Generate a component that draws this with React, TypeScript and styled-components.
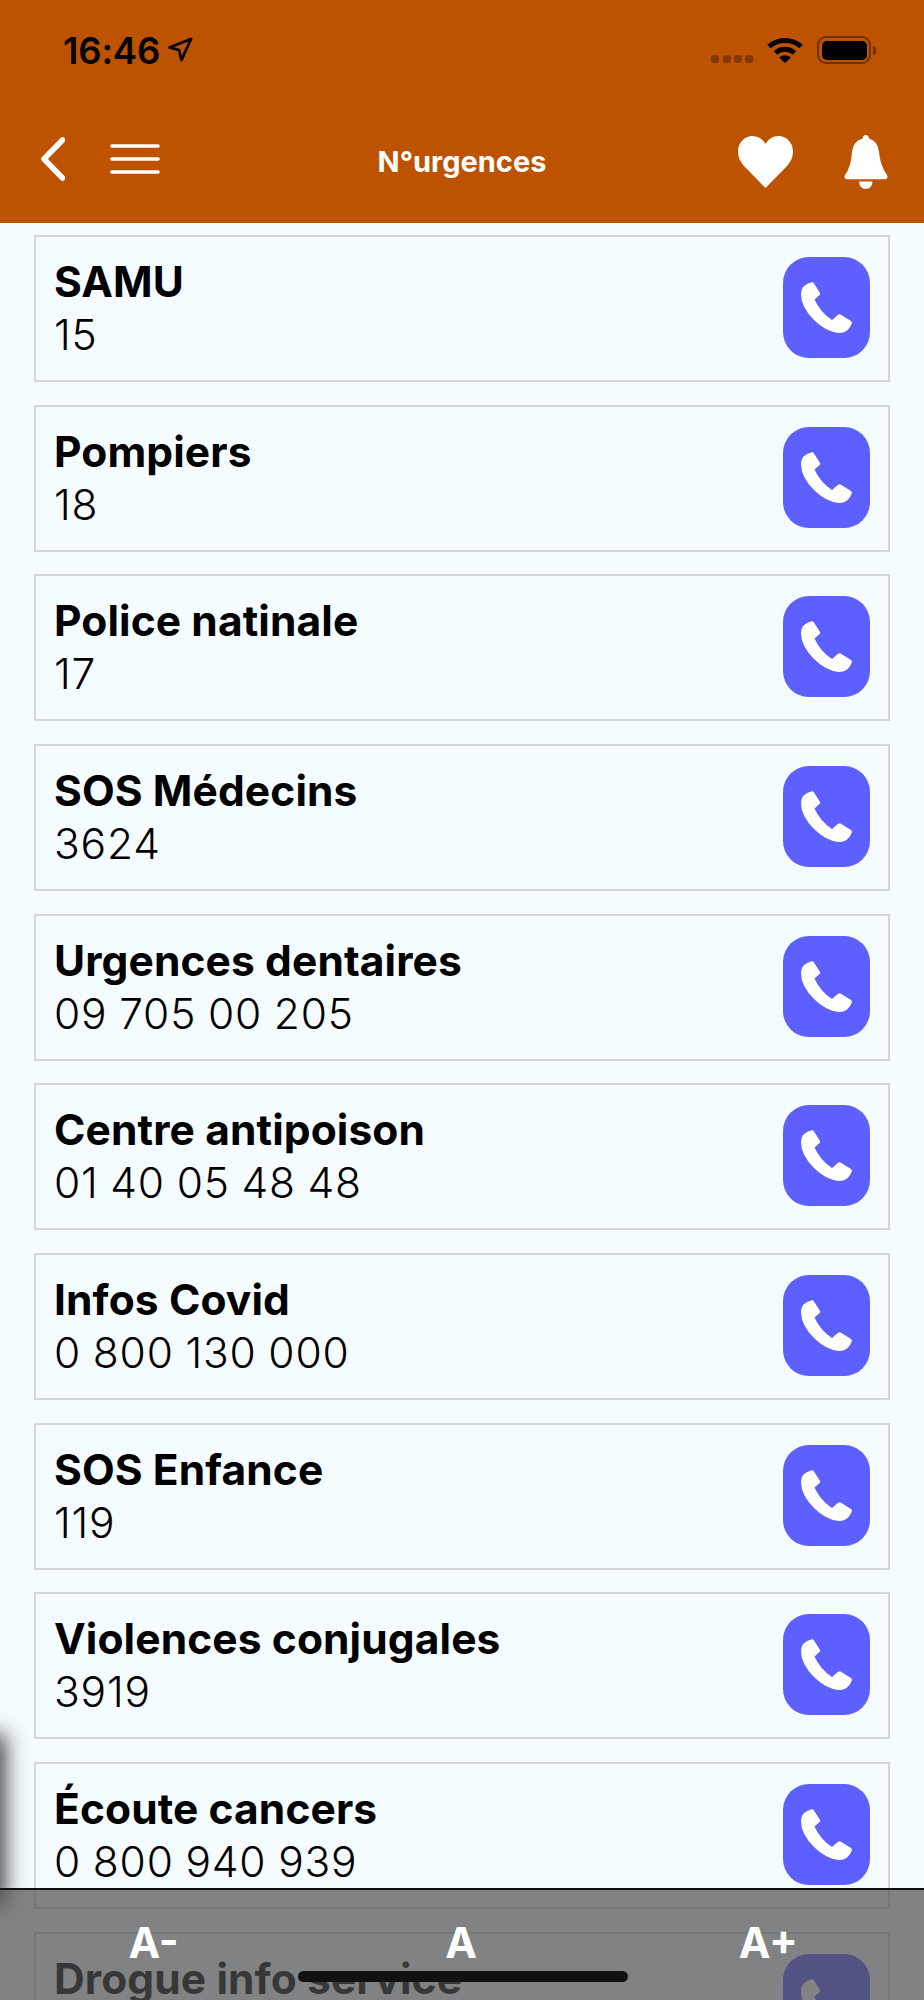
import styled, { createGlobalStyle } from "styled-components";

const contacts = [
  { name: "SAMU", phone: "15" },
  { name: "Pompiers", phone: "18" },
  { name: "Police natinale", phone: "17" },
  { name: "SOS Médecins", phone: "3624" },
  { name: "Urgences dentaires", phone: "09 705 00 205" },
  { name: "Centre antipoison", phone: "01 40 05 48 48" },
  { name: "Infos Covid", phone: "0 800 130 000" },
  { name: "SOS Enfance", phone: "119" },
  { name: "Violences conjugales", phone: "3919" },
  { name: "Écoute cancers", phone: "0 800 940 939" },
  { name: "Drogue info service", phone: "0 800 23 13 13" },
];

const GlobalStyle = createGlobalStyle`
  html, body {
    margin: 0;
    padding: 0;
    background: #f5fcff;
  }
  body {
    font-family: Inter, "Liberation Sans", sans-serif;
    color: #000;
  }
`;

const Screen = styled.div`
  position: relative;
  width: 924px;
  height: 2000px;
  overflow: hidden;
  background: #f5fcff;
`;

const Header = styled.header`
  display: flex;
  flex-direction: column;
  height: 223px;
  background: #bd5200;
`;

const StatusBar = styled.div`
  display: flex;
  justify-content: space-between;
  height: 100px;
  padding: 36px 48px 0 63px;
  box-sizing: border-box;
`;

const Clock = styled.div`
  display: flex;
  align-items: flex-start;
  gap: 7px;
  font-size: 36.5px;
  font-weight: 600;
  line-height: 30px;
  letter-spacing: -0.2px;
  color: #050505;
`;

const StatusIcons = styled.div`
  display: flex;
  align-items: flex-start;
  gap: 14px;
`;

const SignalDots = styled.div`
  display: flex;
  gap: 3.2px;
  margin-top: 19px;
`;

const SignalDot = styled.span`
  width: 8px;
  height: 8px;
  border-radius: 2.5px;
  background: rgba(0, 0, 0, 0.3);
`;

const Battery = styled.div`
  display: flex;
  align-items: center;
  gap: 2px;
`;

const BatteryShell = styled.div`
  box-sizing: border-box;
  width: 54px;
  height: 28px;
  padding: 2.5px;
  border: 2px solid rgba(0, 0, 0, 0.4);
  border-radius: 9px;
`;

const BatteryFill = styled.div`
  height: 100%;
  border-radius: 5px;
  background: #000;
`;

const BatteryNub = styled.div`
  width: 3px;
  height: 9px;
  border-radius: 0 3px 3px 0;
  background: rgba(0, 0, 0, 0.4);
`;

const Toolbar = styled.div`
  display: grid;
  grid-template-columns: 1fr auto 1fr;
  align-items: center;
  flex: 1;
  padding: 0 36px;
`;

const ToolbarGroup = styled.div<{ $end?: boolean; $gap: number }>`
  display: flex;
  align-items: center;
  justify-content: ${(p) => (p.$end ? "flex-end" : "flex-start")};
  gap: ${(p) => p.$gap}px;
`;

const Title = styled.h1`
  margin: 1px 0 0;
  font-size: 29px;
  font-weight: 700;
  line-height: 34px;
  color: #fff;
`;

const Icon = styled.svg<{ $lift?: number }>`
  display: block;
  flex: none;
  margin-bottom: ${(p) => p.$lift ?? 0}px;
`;

const List = styled.main`
  display: flex;
  flex-direction: column;
  gap: 22.67px;
  padding: 12px 34px 0;
`;

const Card = styled.article`
  box-sizing: border-box;
  display: flex;
  flex: none;
  align-items: flex-start;
  justify-content: space-between;
  height: 147px;
  padding: 18px 18px 0;
  border: 2px solid #d5d6d6;
`;

const CardText = styled.div`
  display: flex;
  flex-direction: column;
`;

const Name = styled.div`
  font-size: 42.5px;
  font-weight: 700;
  line-height: 53px;
  letter-spacing: 0.1px;
`;

const Phone = styled.div`
  font-size: 42.5px;
  font-weight: 350;
  line-height: 53px;
  letter-spacing: 0.8px;
  word-spacing: -1px;
`;

const CallButton = styled.button`
  display: flex;
  align-items: center;
  justify-content: center;
  width: 87px;
  height: 101px;
  margin-top: 2px;
  padding: 0;
  border: none;
  border-radius: 26px;
  background: #5e5fff;
`;

const DrawerShadow = styled.div`
  position: absolute;
  left: -14px;
  top: 1738px;
  width: 14px;
  height: 162px;
  box-shadow: 0 0 22px 4px rgba(0, 0, 0, 0.85);
`;

const FontBar = styled.footer`
  position: absolute;
  left: 0;
  right: 0;
  bottom: 0;
  box-sizing: border-box;
  display: grid;
  grid-template-columns: repeat(3, 1fr);
  height: 112px;
  padding: 29px 2px 0 0;
  border-top: 2.5px solid #111;
  background: rgba(78, 78, 78, 0.7);
`;

const FontOption = styled.div`
  font-size: 42.5px;
  font-weight: 700;
  line-height: 48px;
  text-align: center;
  color: #fff;
`;

const HomeIndicator = styled.div`
  position: absolute;
  left: 298px;
  bottom: 18px;
  width: 330px;
  height: 11px;
  border-radius: 6px;
  background: #111;
`;

function PhoneGlyph() {
  return (
    <Icon width="51" height="51" viewBox="0 0 51 51" fill="#fff">
      <path d="M10.7 .3Q12 0 12.8 1.3L19 11Q19.5 12.3 18.6 13L13.5 17.5Q19 30 31 38L36.8 33Q38.5 31.8 40 32.8L50 39Q51.3 40 50.6 42Q47 51 38 51Q25 50 13 38Q0 25 0 12Q0 3 10.7 .3Z" />
    </Icon>
  );
}

export default function App() {
  return (
    <>
      <GlobalStyle />
      <Screen>
        <Header>
          <StatusBar>
            <Clock>
              16:46
              <Icon width="26" height="26" viewBox="0 0 26 26" fill="none" stroke="#050505" strokeWidth="2.8" strokeLinejoin="round">
                <path d="M24 3 2.500 11.500 12 14 14.500 24Z" />
              </Icon>
            </Clock>
            <StatusIcons>
              <SignalDots>
                <SignalDot />
                <SignalDot />
                <SignalDot />
                <SignalDot />
              </SignalDots>
              <Icon width="36" height="27" viewBox="0 0 36 27" fill="none" stroke="#000" strokeWidth="5">
                <path d="M2 10.5A24 24 0 0 1 34 10.5" />
                <path d="M8.5 17A14 14 0 0 1 27.5 17" />
                <path d="M12 21.5Q18 17 24 21.5L18 27Z" fill="#000" stroke="none" />
              </Icon>
              <Battery>
                <BatteryShell>
                  <BatteryFill />
                </BatteryShell>
                <BatteryNub />
              </Battery>
            </StatusIcons>
          </StatusBar>
          <Toolbar>
            <ToolbarGroup $gap={45}>
              <Icon width="29" height="44" viewBox="-5 0 29 44" fill="none" stroke="#fff" strokeWidth="5.6" strokeLinecap="round" strokeLinejoin="round" $lift={5}>
                <path d="M21.5 3 3 22 21.5 41" />
              </Icon>
              <Icon width="50" height="30" viewBox="0 0 50 30" fill="none" stroke="#fff" strokeWidth="3.6" strokeLinecap="round" $lift={5}>
                <path d="M2 2H48M2 15H48M2 28H48" />
              </Icon>
            </ToolbarGroup>
            <Title>N°urgences</Title>
            <ToolbarGroup $end $gap={51}>
              <Icon width="55" height="52" viewBox="0 0 55 52" fill="#fff">
                <path d="M27.5 52 6 30C2 25.500 0 21 0 15.500 0 6.500 6.500 0 14.500 0 20 0 24.800 3 27.500 8 30.200 3 35 0 40.500 0 48.500 0 55 6.500 55 15.500 55 21 53 25.500 49 30Z" />
              </Icon>
              <Icon width="44" height="54" viewBox="0 0 44 54" fill="#fff">
                <path d="M21.800 0A3 3 0 0 1 24.800 3.500Q34 6 35 17 36 30 43 40 44.500 42.500 42 44.300H2Q-.5 42.500 1 40 7 32 8 17 9 6 18.800 3.500A3 3 0 0 1 21.800 0Z" />
                <path d="M15 46.500H28.500Q28 54 21.800 54 15.500 54 15 46.500Z" />
              </Icon>
            </ToolbarGroup>
          </Toolbar>
        </Header>
        <List>
          {contacts.map((contact) => (
            <Card key={contact.name}>
              <CardText>
                <Name>{contact.name}</Name>
                <Phone>{contact.phone}</Phone>
              </CardText>
              <CallButton aria-label={`Appeler ${contact.name}`}>
                <PhoneGlyph />
              </CallButton>
            </Card>
          ))}
        </List>
        <DrawerShadow />
        <FontBar>
          <FontOption>A-</FontOption>
          <FontOption>A</FontOption>
          <FontOption>A+</FontOption>
        </FontBar>
        <HomeIndicator />
      </Screen>
    </>
  );
}
